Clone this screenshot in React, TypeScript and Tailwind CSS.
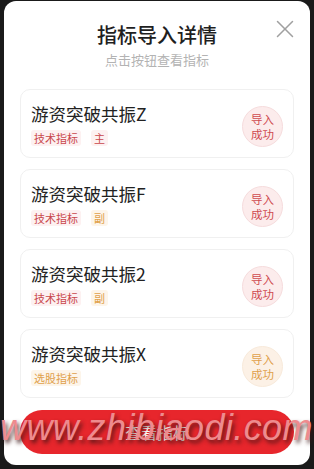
import { X } from 'lucide-react';

type Item = {
  name: string;
  tags: { text: string; tone: 'red' | 'orange' }[];
  tone: 'red' | 'orange';
};

const items: Item[] = [
  { name: '游资突破共振Z', tags: [{ text: '技术指标', tone: 'red' }, { text: '主', tone: 'red' }], tone: 'red' },
  { name: '游资突破共振F', tags: [{ text: '技术指标', tone: 'red' }, { text: '副', tone: 'orange' }], tone: 'red' },
  { name: '游资突破共振2', tags: [{ text: '技术指标', tone: 'red' }, { text: '副', tone: 'orange' }], tone: 'red' },
  { name: '游资突破共振X', tags: [{ text: '选股指标', tone: 'orange' }], tone: 'orange' },
];

function Tag({ text, tone }: { text: string; tone: 'red' | 'orange' }) {
  return (
    <span
      className={
        tone === 'red'
          ? 'rounded-[3px] bg-[#fdf1f1] px-[3px] text-[11px] leading-[16px] text-[#c9474c]'
          : 'rounded-[3px] bg-[#fdf5ea] px-[3px] text-[11px] leading-[16px] text-[#e0a04a]'
      }
    >
      {text}
    </span>
  );
}

export default function App() {
  return (
    <div className="relative h-[469px] w-[314px] overflow-hidden bg-[#1a1a1a] font-['Noto_Sans_CJK_SC','Noto_Sans',sans-serif]">
      <div className="absolute inset-x-[4px] top-[1px] bottom-[4px] rounded-[12px] bg-white px-[16px] pt-[18px]">
        {/* Header */}
        <div className="relative flex flex-col items-center">
          <h2 className="text-[20px] font-medium leading-[32px] text-[#1f1f1f]">
            指标导入详情
          </h2>
          <p className="text-[13px] leading-[18px] text-[#b3b3b3]">
            点击按钮查看指标
          </p>
          <X
            className="absolute right-[-6px] top-[-5px] h-[30px] w-[30px] text-[#a0a0a0]"
            strokeWidth={1.2}
          />
        </div>

        {/* List */}
        <div className="mt-[20px] flex flex-col gap-[11px]">
          {items.map((it) => (
            <div
              key={it.name}
              className="flex h-[69px] items-center justify-between rounded-[10px] border border-[#f0f0f0] pl-[10px] pr-[10px]"
            >
              <div className="flex flex-col gap-[5px] pt-[2px]">
                <div className="text-[17.5px] leading-[22px] text-[#222]">{it.name}</div>
                <div className="flex items-center gap-[10px]">
                  {it.tags.map((t) => (
                    <Tag key={t.text} text={t.text} tone={t.tone} />
                  ))}
                </div>
              </div>
              <div
                className={
                  it.tone === 'red'
                    ? 'mt-[6px] flex h-[41px] w-[41px] items-center justify-center rounded-full border border-[#f6dcdd] bg-[#fcecec] text-center text-[11.5px] leading-[15px] text-[#cf4a4f]'
                    : 'mt-[6px] flex h-[41px] w-[41px] items-center justify-center rounded-full border border-[#f8eadb] bg-[#fcf1e6] text-center text-[11.5px] leading-[15px] text-[#e0a04a]'
                }
              >
                <span>
                  导入
                  <br />
                  成功
                </span>
              </div>
            </div>
          ))}
        </div>

        {/* Button */}
        <button className="mt-[12px] flex h-[44px] w-full items-center justify-center rounded-full bg-[#e7262c] text-[16px] text-white">
          查看指标
        </button>
      </div>

      {/* Watermark */}
      <div className="pointer-events-none absolute left-0 top-[400px] whitespace-nowrap font-['Liberation_Sans',sans-serif] text-[36px] italic leading-[56px] tracking-[0.4px] text-[#ee8b8e] [text-shadow:2px_3px_4px_rgba(60,20,20,0.85)]">
        www.zhibiaodi.com
      </div>
    </div>
  );
}
